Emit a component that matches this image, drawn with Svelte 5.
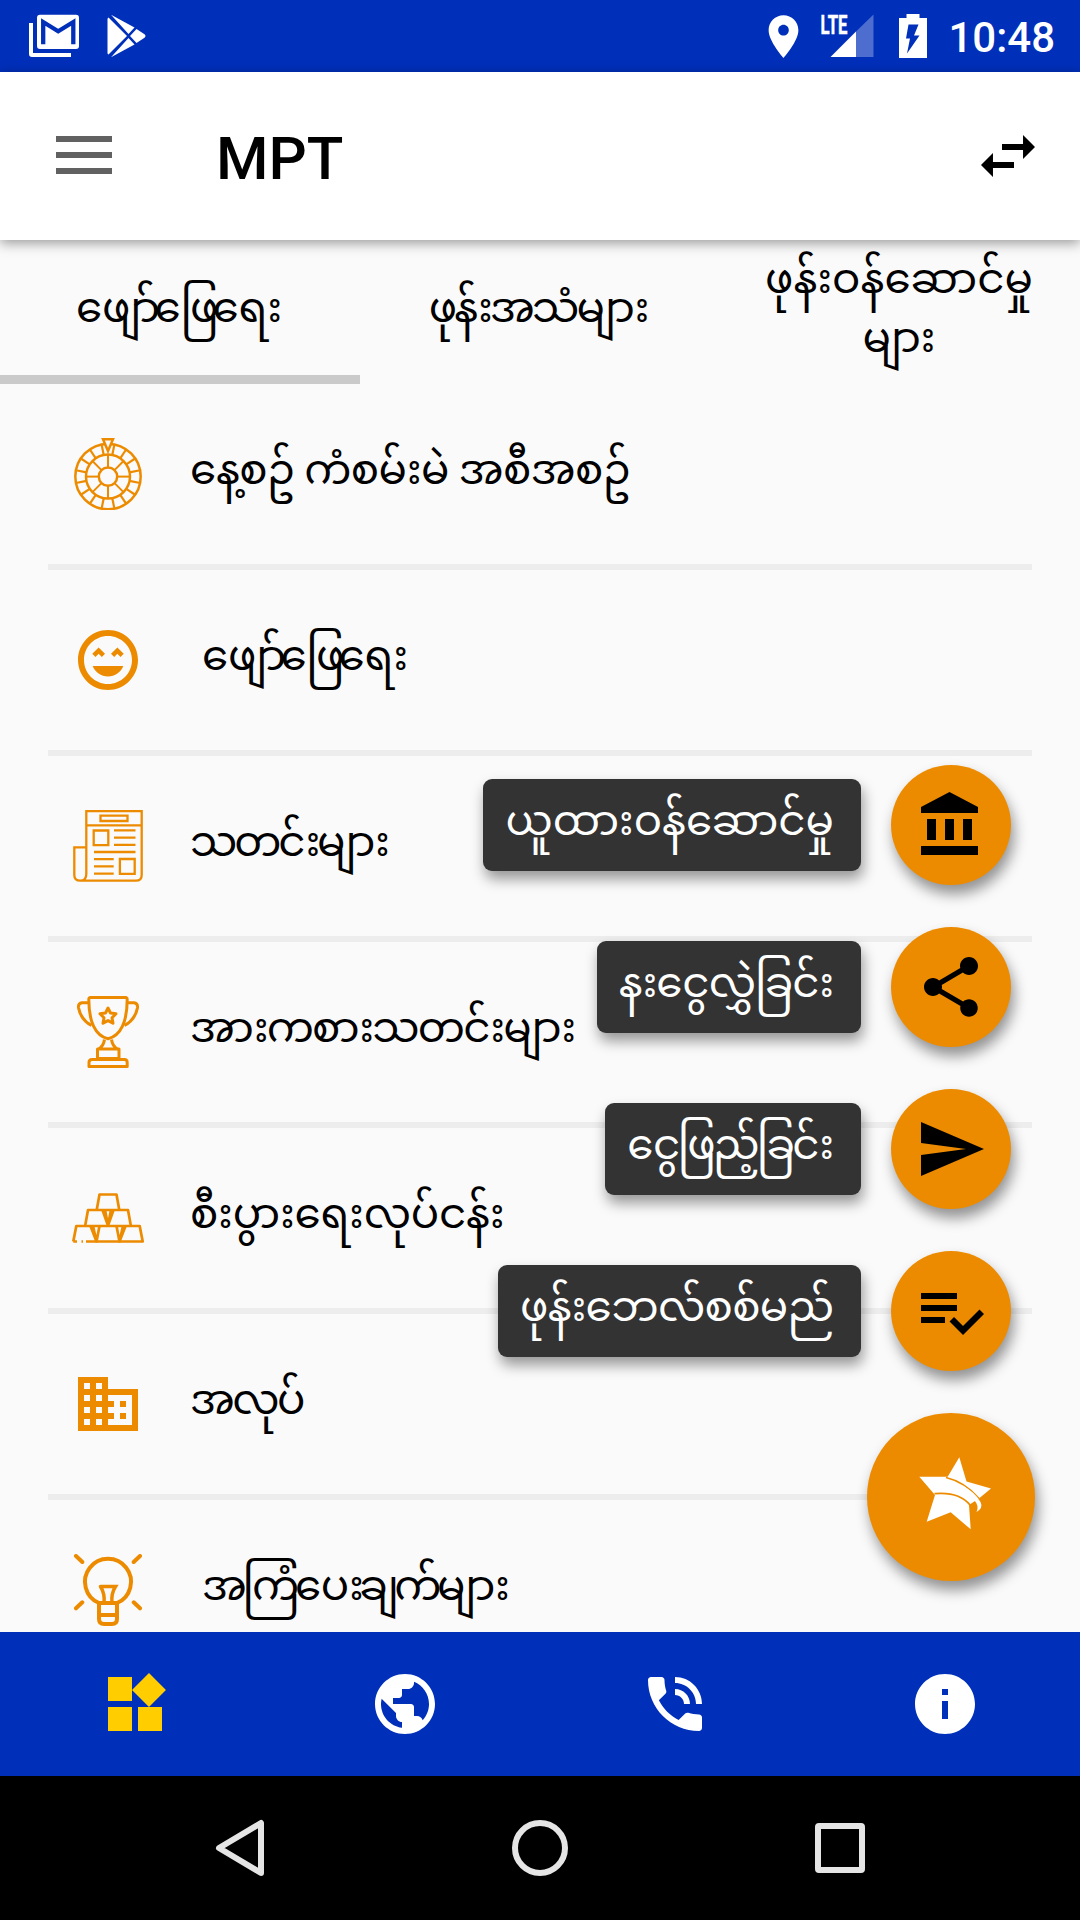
<script>
	let activeTab = 0;
	let activeNav = 0;

	// spacing is the letter-spacing in px, negative where the words sit tighter
	const tabs = [
		{ text: 'ဖျော်ဖြေရေး', spacing: -5.8 },
		{ text: 'ဖုန်းအသံများ', spacing: -2.8 },
		{ text: 'ဖုန်းဝန်ဆောင်မှုများ', spacing: 0.15 }
	];

	const items = [
		{ icon: 'wheel', text: 'နေ့စဥ် ကံစမ်းမဲ အစီအစဥ်', spacing: -0.55 },
		{ icon: 'smile', text: 'ဖျော်ဖြေရေး', spacing: -5.8, indent: true },
		{ icon: 'news', text: 'သတင်းများ', spacing: -3.1 },
		{ icon: 'trophy', text: 'အားကစားသတင်းများ', spacing: -1.8 },
		{ icon: 'gold', text: 'စီးပွားရေးလုပ်ငန်း', spacing: -0.2 },
		{ icon: 'building', text: 'အလုပ်', spacing: -2.6 },
		{ icon: 'bulb', text: 'အကြံပေးချက်များ', spacing: -4.4, indent: true }
	];

	const actions = [
		{
			text: 'ယူထားဝန်ဆောင်မှု',
			spacing: 0,
			path: 'M4 10v7h3v-7H4zm6 0v7h3v-7h-3zM2 22h19v-3H2v3zm14-12v7h3v-7h-3zm-4.5-9L2 6v2h19V6l-9.5-5z'
		},
		{
			text: 'နးငွေလွှဲခြင်း',
			spacing: -0.9,
			path: 'M18 16.08c-.76 0-1.44.3-1.96.77L8.91 12.7c.05-.23.09-.46.09-.7s-.04-.47-.09-.7l7.05-4.11c.54.5 1.25.81 2.04.81 1.66 0 3-1.34 3-3s-1.34-3-3-3-3 1.34-3 3c0 .24.04.47.09.7L8.04 9.81C7.5 9.31 6.79 9 6 9c-1.66 0-3 1.34-3 3s1.34 3 3 3c.79 0 1.5-.31 2.04-.81l7.12 4.16c-.05.21-.08.43-.08.65 0 1.61 1.31 2.92 2.92 2.92s2.92-1.31 2.92-2.92-1.31-2.92-2.92-2.92z'
		},
		{
			text: 'ငွေဖြည့်ခြင်း',
			spacing: -2.7,
			path: 'M2.01 21L23 12 2.01 3 2 10l15 2-15 2z'
		},
		{
			text: 'ဖုန်းဘေလ်စစ်မည်',
			spacing: -0.7,
			path: 'M14 10H2v2h12v-2zm0-4H2v2h12V6zM2 16h8v-2H2v2zm19.5-4.5L23 13l-6.99 7-4.51-4.5L13 14l3.01 3 5.49-5.5z'
		}
	];

	const navs = [
		'M13 13v8h8v-8h-8zM3 21h8v-8H3v8zM3 3v8h8V3H3zm13.66-1.31L11 7.34 16.66 13l5.66-5.66-5.66-5.65z',
		'M12 2C6.48 2 2 6.48 2 12s4.48 10 10 10 10-4.48 10-10S17.52 2 12 2zm-1 17.93c-3.95-.49-7-3.85-7-7.93 0-.62.08-1.21.21-1.79L9 15v1c0 1.1.9 2 2 2v1.93zm6.9-2.54c-.26-.81-1-1.39-1.9-1.39h-1v-3c0-.55-.45-1-1-1H8v-2h2c.55 0 1-.45 1-1V7h2c1.1 0 2-.9 2-2v-.41c2.93 1.19 5 4.06 5 7.41 0 2.08-.8 3.97-2.1 5.39z',
		'M20 15.5c-1.25 0-2.45-.2-3.57-.57-.35-.11-.74-.03-1.02.24l-2.2 2.2c-2.83-1.44-5.15-3.75-6.59-6.59l2.2-2.21c.28-.26.36-.65.25-1C8.7 6.45 8.5 5.25 8.5 4c0-.55-.45-1-1-1H4c-.55 0-1 .45-1 1 0 9.39 7.61 17 17 17 .55 0 1-.45 1-1v-3.5c0-.55-.45-1-1-1zM19 12h2c0-4.97-4.03-9-9-9v2c3.87 0 7 3.13 7 7zm-4 0h2c0-2.76-2.24-5-5-5v2c1.66 0 3 1.34 3 3z',
		'M12 2C6.48 2 2 6.48 2 12s4.48 10 10 10 10-4.48 10-10S17.52 2 12 2zm1 15h-2v-6h2v6zm0-8h-2V7h2v2z'
	];

	const innerSpokes = [0, 45, 90, 135, 180, 225, 270, 315];
	const outerSpokes = Array.from({ length: 16 }, (_, i) => 11.25 + i * 22.5);

	// the margin takes back the spacing that trails the last letter
	function spaced(px) {
		return `letter-spacing: ${px}px; margin-right: ${-px}px`;
	}
</script>

<div class="phone">
	<div class="status">
		<svg class="mail" width="50" height="44" viewBox="0 0 50 44">
			<path d="M0 9h4v30h38v4H3q-3 0-3-3z" fill="#fff" />
			<rect x="8" y=".7" width="42" height="34.3" rx="3" fill="#fff" />
			<path d="M14.2 30.3V8l15 9.3L44.3 8v22.3" fill="none" stroke="#002fba" stroke-width="4.3" />
		</svg>
		<svg width="40" height="44" viewBox="0 0 40 44">
			<path d="M1.5 3.5 20 22 1.5 40.5Q.5 40 .5 39V5Q.5 4 1.5 3.5zM4 .8 27.5 13.5 21.5 20zM4 43.2 27.5 30.5 21.5 24zM29.5 15l8 5.3q2 1.7 0 3.4l-8 5.3-6.5-7z" fill="#fff" />
		</svg>
		<div class="right">
			<svg class="pin" width="51" height="51" viewBox="0 0 24 24">
				<path d="M12 2C8.13 2 5 5.13 5 9c0 5.25 7 13 7 13s7-7.75 7-13c0-3.87-3.13-7-7-7zm0 9.5c-1.38 0-2.5-1.12-2.5-2.5s1.12-2.5 2.5-2.5 2.5 1.12 2.5 2.5-1.12 2.5-2.5 2.5z" fill="#fff" />
			</svg>
			<svg class="signal" width="54" height="44" viewBox="0 0 54 44">
				<text x=".5" y="20" textLength="27" lengthAdjust="spacingAndGlyphs" class="lte">LTE</text>
				<path d="M36 17.5 53.5.5V43H36z" fill="#fff" opacity=".3" />
				<path d="M10.5 43 36 17.5V43z" fill="#fff" />
			</svg>
			<svg class="battery" width="28" height="44" viewBox="0 0 28 44">
				<path d="M7.5 0h13v4H28v40H0V4h7.5z" fill="#fff" />
				<path d="M9.5 10.5h10l-4.5 11h5.5L8 39.5l3-15H7z" fill="#002fba" />
			</svg>
			<span class="time">10:48</span>
		</div>
	</div>

	<header>
		<div class="menu"><i></i><i></i><i></i></div>
		<h1>MPT</h1>
		<svg width="72" height="72" viewBox="0 0 24 24">
			<path d="M6.99 11L3 15l3.99 4v-3H14v-2H6.99v-3zM21 9l-3.99-4v3H10v2h7.01v3L21 9z" />
		</svg>
	</header>

	<div class="tabs">
		{#each tabs as tab, i}
			<div class="tab" class:active={i === activeTab}>
				<span style={spaced(tab.spacing)}>{tab.text}</span>
			</div>
		{/each}
	</div>

	<div class="list">
		{#each items as item}
			<div class="row">
				<svg width="72" height="72" viewBox="0 0 72 72" class="line">
					{#if item.icon === 'wheel'}
						<g stroke-width="2.5">
							<circle cx="36" cy="38.6" r="32.7" />
							<circle cx="36" cy="38.6" r="22" />
							<circle cx="36" cy="38.6" r="9.2" />
							{#each innerSpokes as a}
								<path d="M36 29.4V16.6" stroke-width="2" transform="rotate({a} 36 38.6)" />
							{/each}
							{#each outerSpokes as a}
								<path d="M36 16.6V6" stroke-width="2.2" transform="rotate({a} 36 38.6)" />
							{/each}
							<path d="M31 1.2h10L36 13z" fill="#fafafa" />
						</g>
					{:else if item.icon === 'smile'}
						<path class="solid" transform="scale(3)" d="M11.99 2C6.47 2 2 6.47 2 12s4.47 10 9.99 10S22 17.53 22 12 17.52 2 11.99 2zM12 20c-4.42 0-8-3.58-8-8s3.58-8 8-8 8 3.58 8 8-3.58 8-8 8zm1-10.06L14.06 11l1.06-1.06L16.18 11l1.06-1.06-2.12-2.12zm-4.12 0L9.94 11 11 9.94 8.88 7.82 6.76 9.94 7.82 11zM12 17.5c2.33 0 4.31-1.46 5.11-3.5H6.89c.8 2.04 2.78 3.5 5.11 3.5z" />
					{:else if item.icon === 'news'}
						<g stroke-width="2.3">
							<path d="M14.3 64V1.2h55.4V65q0 5.7-5.7 5.7H7.5M14.3 15.3h55.4M14.3 37.3h-12V65q0 5.7 6 5.7t6-6.7" />
							<path d="M28.5 5.7h27v5.3h-27zM21.7 20.5h14.6v14.6H21.7zM47.9 49h14.8v14.8H47.9z" />
							<path d="M42 20.4h21.5M42 27.6h21.5M42 34.8h21.5M22 42h41.5M22 49.2h19.7M22 56.4h19.7M22 63.6h19.7" />
						</g>
					{:else if item.icon === 'trophy'}
						<g stroke-width="3" stroke-linejoin="round">
							<path d="M18.5 1.6h35q1.7 0 1.7 2C55.2 25 49 40 36 42.7 23 40 16.8 25 16.8 3.6q0-2 1.7-2z" />
							<path d="M16.8 6.7H10q-4 .5-3.5 5C8 20 13 26 19.5 29.5M55.2 6.7H62q4 .5 3.5 5C64 20 59 26 52.5 29.5" />
							<path d="M32.5 43.5q-1 7-6 9.5M39.5 43.5q1 7 6 9.5M25.5 53h21.5v9.5H25.5z" />
							<path d="M20 63.5h32.5q2.7 0 2.7 3v4H17v-4q0-3 3-3z" />
							<path d="M36 12l2.5 5 5.5.8-4 3.9 1 5.5-5-2.6-5 2.6 1-5.5-4-3.9 5.5-.8z" />
						</g>
					{:else if item.icon === 'gold'}
						<g stroke-width="2.7" stroke-linejoin="round">
							<path d="M24.8 27.5 27.5 12.5h17l2.7 15" />
							<path d="M13.2 43.5 16 28h40l2.8 15.5M33 28l3 15.5L39 28M30.5 28l5.5 15.5L41.5 28" />
							<path d="M1.3 59.5 4.3 44h63.4l3 15.5H14M11 59.5h-1.5M5 59.5H1.3" />
							<path d="M21 44l3.5 15.5L27.5 44M18.5 44l6 15.5M51 44l-3.5 15.5L44.5 44M53.5 44l-6 15.5" />
						</g>
					{:else if item.icon === 'building'}
						<path class="solid" transform="scale(3)" d="M12 7V3H2v18h20V7H12zM6 19H4v-2h2v2zm0-4H4v-2h2v2zm0-4H4V9h2v2zm0-4H4V5h2v2zm4 12H8v-2h2v2zm0-4H8v-2h2v2zm0-4H8V9h2v2zm0-4H8V5h2v2zm10 12h-8v-2h2v-2h-2v-2h2v-2h-2V9h8v10zm-2-8h-2v2h2v-2zm0 4h-2v2h2v-2z" />
					{:else}
						<g stroke-width="4" stroke-linecap="round">
							<path d="M27 49a23 23 0 1 1 18 0" />
							<path d="M27 49v16q0 5 5 5h8q5 0 5-5V49zM27 61h18" />
							<path d="M28.5 32.5h15q-4.5 7-3.5 16.5M28.5 32.5q4.5 7 3.5 16.5" stroke-width="3.5" />
							<path d="M4 2l6.3 6M68 2l-6.3 6M4 54.3l6.3-6M68 54.3l-6.3-6" />
						</g>
					{/if}
				</svg>
				<span class:indent={item.indent} style={spaced(item.spacing)}>{item.text}</span>
			</div>
		{/each}
	</div>

	<div class="actions">
		{#each actions as action}
			<div class="action">
				<div class="label">
					<span style={spaced(action.spacing)}>{action.text}</span>
				</div>
				<div class="fab">
					<svg width="72" height="72" viewBox="0 0 24 24"><path d={action.path} /></svg>
				</div>
			</div>
		{/each}
		<div class="fab big">
			<svg width="84" height="84" viewBox="0 0 84 84">
				<path d="M50.3 2.3 57.5 26.5 82 33.5 70.5 43 60 50 61.7 74.3 41.7 57.3 17.7 66.7 26 40 10.3 21.7 38.7 21.7z" fill="#fff" />
				<path d="M37 22.5Q56 27 70 43.5M25.5 38.7Q50 36.5 61 50q2 3 3 8" fill="none" stroke="#ed8b00" stroke-width="1.7" />
				<path d="M52 30Q66 37 71.5 47q3 6-4 10 3-6-2-11.5Q59 37 50 33z" fill="#fff" />
			</svg>
		</div>
	</div>

	<nav>
		{#each navs as path, i}
			<div class="nav" class:on={i === activeNav}>
				<svg width="72" height="72" viewBox="0 0 24 24"><path d={path} /></svg>
			</div>
		{/each}
	</nav>

	<div class="system">
		<svg width="60" height="60" viewBox="0 0 60 60"><path d="M51 5v50L9 30z" /></svg>
		<svg width="60" height="60" viewBox="0 0 60 60"><circle cx="30" cy="30" r="25" /></svg>
		<svg width="60" height="60" viewBox="0 0 60 60"><rect x="8" y="8" width="44" height="44" rx="1" /></svg>
	</div>
</div>

<style>
	:global(body) {
		margin: 0;
	}

	.phone {
		position: relative;
		display: flex;
		flex-direction: column;
		width: 1080px;
		height: 1920px;
		overflow: hidden;
		background: #fafafa;
		color: #000;
		font-family: Roboto, "Noto Sans Myanmar", "Padauk", "Noto Sans", sans-serif;
		font-size: 42px;
	}

	svg {
		display: block;
		flex: none;
	}

	.status {
		flex: none;
		display: flex;
		align-items: center;
		box-sizing: border-box;
		height: 72px;
		padding: 0 25px 0 29px;
		background: #002fba;
	}

	.mail {
		margin-right: 28px;
	}

	.right {
		display: flex;
		align-items: center;
		margin-left: auto;
	}

	.pin {
		margin-right: 11px;
	}

	.signal {
		margin-right: 25px;
		overflow: visible;
	}

	.battery {
		margin-right: 21px;
	}

	.lte {
		fill: #fff;
		stroke: #fff;
		stroke-width: 0.5;
		font-weight: 700;
		font-size: 26px;
	}

	.time {
		color: #fff;
		font-size: 42px;
		font-weight: 500;
		line-height: 72px;
		padding-top: 3px;
		margin-bottom: -1px;
	}

	header {
		position: relative;
		z-index: 1;
		flex: none;
		display: flex;
		align-items: center;
		box-sizing: border-box;
		height: 168px;
		padding: 0 36px 0 56px;
		background: #fff;
		box-shadow: 0 3px 12px rgba(0, 0, 0, 0.4);
	}

	header svg {
		margin-left: auto;
	}

	.menu {
		display: flex;
		flex-direction: column;
		gap: 10px;
		width: 56px;
		margin-right: 104px;
		padding-bottom: 2px;
	}

	.menu i {
		height: 6px;
		background: #616161;
	}

	h1 {
		margin: 0;
		font-size: 60px;
		font-weight: 500;
		line-height: 72px;
		padding-top: 5px;
	}

	.tabs {
		flex: none;
		display: grid;
		grid-template-columns: repeat(3, 1fr);
		height: 144px;
	}

	.tab {
		display: flex;
		align-items: center;
		justify-content: center;
		box-sizing: border-box;
		padding: 0 38px 0 36px;
		border-bottom: 9px solid transparent;
		text-align: center;
		line-height: 59px;
	}

	.tab.active {
		border-color: #cacaca;
	}

	.list {
		flex: 1;
		min-height: 0;
		overflow: hidden;
		padding: 0 48px;
	}

	.row {
		display: flex;
		align-items: center;
		height: 180px;
		padding-left: 24px;
		border-bottom: 6px solid #ededed;
		white-space: nowrap;
	}

	.row span {
		margin-left: 46px;
	}

	.row span.indent {
		margin-left: 58px;
	}

	.line {
		fill: none;
		stroke: #ed8b00;
	}

	.solid {
		fill: #ed8b00;
		stroke: none;
	}

	.actions {
		position: absolute;
		right: 45px;
		top: 765px;
		display: flex;
		flex-direction: column;
		align-items: flex-end;
		gap: 42px;
	}

	.action {
		display: flex;
		align-items: center;
		gap: 30px;
		margin-right: 24px;
	}

	.label {
		display: flex;
		align-items: center;
		box-sizing: border-box;
		height: 92px;
		padding: 0 27px 0 22px;
		border-radius: 9px;
		background: #333;
		color: #fff;
		white-space: nowrap;
		box-shadow: 2px 8px 14px rgba(0, 0, 0, 0.4);
	}

	.fab {
		display: flex;
		align-items: center;
		justify-content: center;
		width: 120px;
		height: 120px;
		border-radius: 50%;
		background: #ed8b00;
		box-shadow: 3px 9px 14px rgba(0, 0, 0, 0.42);
	}

	.fab.big {
		width: 168px;
		height: 168px;
	}

	nav {
		flex: none;
		display: grid;
		grid-template-columns: repeat(4, 1fr);
		height: 144px;
		background: #002fba;
	}

	.nav {
		display: flex;
		align-items: center;
		justify-content: center;
		fill: #fff;
	}

	.nav.on {
		fill: #ffcd00;
	}

	.system {
		flex: none;
		display: flex;
		align-items: center;
		justify-content: center;
		gap: 240px;
		height: 144px;
		background: #000;
		fill: none;
		stroke: #e5e5e5;
		stroke-width: 6;
		stroke-linejoin: round;
	}
</style>
